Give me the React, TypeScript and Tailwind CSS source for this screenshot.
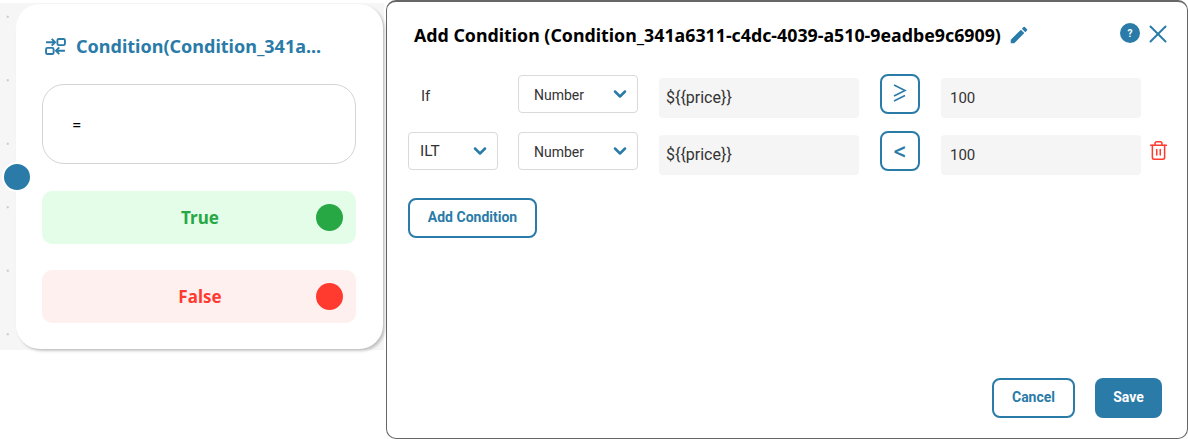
import { ChevronDown, Trash2, X } from 'lucide-react';
import { MdEdit } from 'react-icons/md';

const blue = '#2a7ba8';

function Select({ label, width }: { label: string; width: string }) {
  return (
    <div className={`mt-[1px] flex h-[38px] shrink-0 items-center justify-between rounded-[4px] border border-[#d9d9d9] bg-white pr-[7px] ${width}`}>
      <span className={label === 'ILT' ? 'mt-[2px] pl-[11px] text-[15.5px] text-[#333]' : 'mt-[2px] pl-[15px] text-[14px] text-[#333]'}>{label}</span>
      <ChevronDown size={20} strokeWidth={3} className="-mt-[1px] text-[#2a7ba8]" />
    </div>
  );
}

function Field({ value, width, large }: { value: string; width: string; large?: boolean }) {
  return (
    <div className={`mt-[4px] flex h-[40px] shrink-0 items-center rounded-[4px] bg-[#f5f5f5] text-[#333] ${large ? 'pl-[7px] text-[16px]' : 'pl-[9px] text-[15px]'} ${width}`}>
      {value}
    </div>
  );
}

function Operator({ children }: { children: React.ReactNode }) {
  return (
    <div className="flex h-[40px] w-[40px] shrink-0 items-center justify-center rounded-[8px] border-2 border-[#2a7ba8] text-[#2a7ba8]">
      {children}
    </div>
  );
}

function Branch({ label, bg, color }: { label: string; bg: string; color: string }) {
  return (
    <div className={`relative flex h-[53px] items-center justify-center rounded-[10px] ${bg}`}>
      <span className="pl-[2px] text-[17px] font-bold" style={{ color }}>{label}</span>
      <span className="absolute right-[13px] h-[27px] w-[27px] rounded-full" style={{ background: color }} />
    </div>
  );
}

export default function App() {
  return (
    <div className="flex h-[439px] w-[1188px] overflow-hidden bg-white font-['Roboto',sans-serif]">
      <div className="w-[386px] shrink-0">
        <div className="relative mt-[3px] h-[347px] w-[384px] bg-[#f6f6f6] bg-[radial-gradient(#c8c8c8_1px,transparent_1px)] bg-[size:63.5px_63.5px] bg-[position:-24px_-18px] pl-[16px] pt-[1px]">
          <div className="h-[345px] w-[367px] rounded-[24px] bg-white px-[26px] pt-[30px] shadow-[2px_2px_3px_rgba(0,0,0,0.22)]">
            <div className="flex items-center gap-[10px] pl-[3px] font-['Noto_Sans',sans-serif] text-[#2a7ba8]">
              <svg width="21" height="17" viewBox="0 0 22 18" fill="none" stroke={blue} strokeWidth="2">
                <path d="M1 4.5h9M7 1l3.5 3.5L7 8" />
                <rect x="13" y="1" width="8" height="6.5" rx="1.5" />
                <rect x="1" y="10.5" width="8" height="6.5" rx="1.5" />
                <path d="M21 13.5h-9M15 10l-3.5 3.5L15 17" />
              </svg>
              <span className="text-[18px] font-bold leading-[24px]">Condition(Condition_341a...</span>
            </div>
            <div className="mt-[26px] flex h-[80px] w-[314px] items-center rounded-[22px] border border-[#d4d4d4] pl-[29px] pt-[4px] text-[17px] text-black">
              =
            </div>
            <div className="mt-[27px] flex w-[314px] flex-col gap-[26px] font-['Noto_Sans',sans-serif]">
              <Branch label="True" bg="bg-[#e3fde9]" color="#27a844" />
              <Branch label="False" bg="bg-[#fff0f0]" color="#ff3b30" />
            </div>
          </div>
          <span className="absolute left-[2px] top-[159px] h-[30px] w-[30px] rounded-full border-2 border-white bg-[#2a7ba8]" />
        </div>
      </div>

      <div className="flex h-[439px] w-[802px] shrink-0 flex-col rounded-[10px] border border-t-2 border-[#666] bg-white pl-[21px] pr-[25px]">
        <div className="flex h-[62px] items-center justify-between pl-[6px]">
          <div className="mt-[3px] flex items-center gap-[7px]">
            <span className="whitespace-nowrap font-['Noto_Sans',sans-serif] text-[17.8px] font-bold leading-[24px] text-black">
              Add Condition (Condition_341a6311-c4dc-4039-a510-9eadbe9c6909)
            </span>
            <MdEdit size={22} className="text-[#2a7ba8]" />
          </div>
          <div className="-mr-[11px] flex items-center gap-[3px]">
            <span className="flex h-[20px] w-[20px] items-center justify-center rounded-full bg-[#2a7ba8] text-[10px] font-bold text-white">?</span>
            <X size={30} strokeWidth={1.6} className="mt-[2px] text-[#2a7ba8]" />
          </div>
        </div>

        <div className="mt-[10px] flex flex-col gap-[13px]">
          <div className="flex h-[44px] items-start gap-[21px]">
            <span className="mt-[2px] flex h-[40px] w-[89px] items-center pl-[13px] text-[15px] text-[#333]">If</span>
            <Select label="Number" width="w-[120px]" />
            <Field value="${{price}}" width="w-[200px]" large />
            <Operator>
              <svg width="16" height="22" viewBox="0 0 16 22" fill="none" stroke={blue} strokeWidth="1.6">
                <path d="M2 2l11 5.5L2 13M13 12.5L2 18" />
              </svg>
            </Operator>
            <Field value="100" width="w-[200px]" />
          </div>
          <div className="flex h-[44px] items-start gap-[21px]">
            <div className="mr-[-1px]"><Select label="ILT" width="w-[90px]" /></div>
            <Select label="Number" width="w-[120px]" />
            <Field value="${{price}}" width="w-[200px]" large />
            <Operator><span className="text-[26px] leading-none">&lt;</span></Operator>
            <Field value="100" width="w-[200px]" />
            <Trash2 size={21} strokeWidth={1.75} className="-ml-[14px] mt-[9px] shrink-0 text-[#ff3b30]" />
          </div>
        </div>

        <button className="mt-[23px] h-[40px] w-[129px] rounded-[8px] border-2 border-[#2a7ba8] pb-[2px] text-[14px] font-bold text-[#2a7ba8]">
          Add Condition
        </button>

        <div className="mb-[20px] mt-auto flex justify-end gap-[20px]">
          <button className="h-[40px] w-[83px] rounded-[8px] border-2 border-[#2a7ba8] pb-[2px] text-[14px] font-bold text-[#2a7ba8]">Cancel</button>
          <button className="h-[40px] w-[67px] rounded-[8px] bg-[#2a7ba8] pb-[2px] text-[14px] font-bold text-white">Save</button>
        </div>
      </div>
    </div>
  );
}
